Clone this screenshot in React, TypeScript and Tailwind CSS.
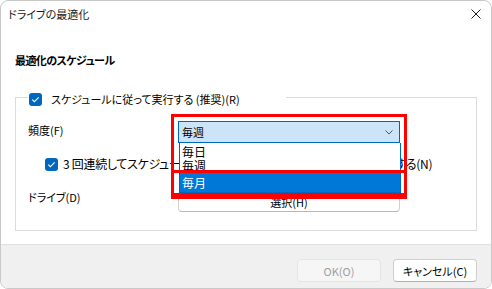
import React from 'react';

const Check = () => (
  <div className="w-[13px] h-[13px] shrink-0 rounded-[3px] bg-[#0067c0] flex items-center justify-center">
    <svg width="13" height="13" viewBox="0 0 13 13">
      <path d="M3.3 6.6 L5.4 8.7 L9.7 4.4" fill="none" stroke="#fff" strokeWidth="1.1" />
    </svg>
  </div>
);

const App = () => {
  return (
    <div className="relative w-[492px] h-[289px] bg-white border border-[#c9c9c9] rounded-[8px] overflow-hidden flex flex-col text-[11px] text-black [font-family:'Noto_Sans_CJK_JP','Noto_Sans',sans-serif] [font-feature-settings:'palt']">
      {/* title bar */}
      <div className="h-[29px] flex items-center justify-between pl-[7px] pr-[10px] text-[#1a1a1a]">
        <span className="leading-[16px] -mt-[3px]">ドライブの最適化</span>
        <svg width="10" height="10" viewBox="0 0 10 10" className="-mt-[3px]">
          <path d="M0.5 0.5 L9.5 9.5 M9.5 0.5 L0.5 9.5" stroke="#1a1a1a" strokeWidth="1" />
        </svg>
      </div>

      <div className="flex-1 px-[14px]">
        <div className="mt-[22px] font-bold leading-[16px] tracking-[-0.6px]">最適化のスケジュール</div>

        {/* group box */}
        <div className="mt-[29px] border border-[#dcdcdc] pb-[18px]">
          <div className="-mt-[7px] ml-[12px] w-[258px] h-[16px] bg-white flex items-center gap-[9px] pl-[1px]">
            <Check />
            <span className="leading-[16px]">スケジュールに従って実行する (推奨)(R)</span>
          </div>

          <div className="mt-[14px] h-[22px] flex">
            <div className="w-[162px] pl-[12px] leading-[16px] mt-[1px]">頻度(F)</div>
            <div className="w-[222px] h-[22px] border border-[#0067c0] bg-[#cce4f7] flex items-center justify-between pl-[3px] pr-[6px]">
              <span className="leading-[16px]">毎週</span>
              <svg width="8" height="5" viewBox="0 0 8 5">
                <path d="M0.5 0.5 L4 4 L7.5 0.5" fill="none" stroke="#555" strokeWidth="1" />
              </svg>
            </div>
          </div>

          <div className="mt-[13px] h-[16px] flex items-center gap-[5px] pl-[29px]">
            <Check />
            <span className="whitespace-nowrap leading-[16px] text-[12px] tracking-[-0.3px]">3 回連続してスケジュールされた実行が行われなかった場合に通知する(N)</span>
          </div>

          <div className="mt-[19px] h-[21px] flex items-start">
            <div className="w-[162px] pl-[12px] leading-[16px] -mt-[2px]">ドライブ(D)</div>
            <button className="w-[222px] h-[21px] rounded-[4px] border border-[#d0d0d0] border-b-[#b8b8b8] bg-white flex items-center justify-center leading-[16px]">
              選択(H)
            </button>
          </div>
        </div>
      </div>

      {/* footer */}
      <div className="h-[44px] border-t border-[#e0e0e0] bg-[#f0f0f0] flex justify-end items-start gap-[12px] pt-[14px] pr-[14px]">
        <button className="w-[84px] h-[23px] rounded-[4px] border border-[#e4e4e4] bg-[#f6f6f6] text-[#9e9e9e] leading-[16px]">
          OK(O)
        </button>
        <button className="w-[84px] h-[23px] rounded-[4px] border border-[#d0d0d0] border-b-[#b0b0b0] bg-white text-black leading-[16px]">
          キャンセル(C)
        </button>
      </div>

      {/* open dropdown list */}
      <div className="absolute left-[178px] top-[142px] w-[222px] h-[50px] bg-white border-x border-b border-[#0067c0] flex flex-col text-[12px]">
        <div className="h-[16px] pt-[2px] pl-[2px] leading-[14px]">毎日</div>
        <div className="h-[14px] pl-[2px] leading-[14px]">毎週</div>
        <div className="h-[19px] pl-[2px] leading-[19px] bg-[#0078d7] text-white">毎月</div>
      </div>

      {/* red annotation boxes */}
      <div className="absolute left-[170px] top-[113px] w-[236px] h-[85px] border-[3px] border-[#ff0000]" />
      <div className="absolute left-[170px] top-[169px] w-[236px] h-[26px] border-[3px] border-[#ff0000]" />
    </div>
  );
};

export default App;
